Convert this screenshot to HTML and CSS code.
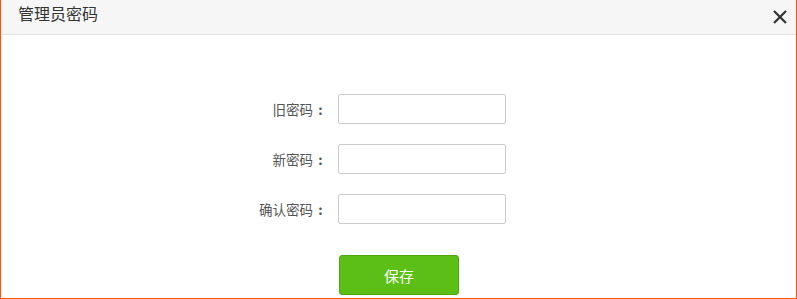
FILE: index.html
```html
<!DOCTYPE html>
<html lang="zh-CN">
<head>
<meta charset="utf-8">
<title>管理员密码</title>
<link rel="stylesheet" href="styles.css">
</head>
<body>
<div class="dialog">
  <div class="dialog-head">
    <span class="dialog-title">管理员密码</span>
    <span class="dialog-close" aria-label="关闭">
      <svg width="14" height="14" viewBox="0 0 14 14"><path d="M1 1 L13 13 M13 1 L1 13" stroke="#333" stroke-width="2.2" fill="none"/></svg>
    </span>
  </div>
  <div class="dialog-body">
    <div class="form-row">
      <label class="form-label">旧密码<span class="colon">:</span></label>
      <input class="form-input" type="password">
    </div>
    <div class="form-row">
      <label class="form-label">新密码<span class="colon">:</span></label>
      <input class="form-input" type="password">
    </div>
    <div class="form-row">
      <label class="form-label">确认密码<span class="colon">:</span></label>
      <input class="form-input" type="password">
    </div>
    <div class="form-actions">
      <button class="btn-save" type="button">保存</button>
    </div>
  </div>
</div>
</body>
</html>
```
FILE: styles.css
```css
html, body {
  margin: 0;
  padding: 0;
  background: #fff;
}
body {
  font-family: "Noto Sans CJK SC", "Noto Sans", "Liberation Sans", sans-serif;
  color: #333;
}
.dialog {
  box-sizing: border-box;
  width: 797px;
  height: 299px;
  border: 1px solid #ff5400;
  border-top: none;
  overflow: hidden;
}
.dialog-head {
  height: 34px;
  background: #f6f6f6;
  border-bottom: 1px solid #e3e3e3;
  display: flex;
  align-items: flex-start;
  justify-content: space-between;
  padding: 0 9px 0 17px;
}
.dialog-title {
  font-size: 16px;
  line-height: 26px;
  color: #333;
}
.dialog-close {
  display: flex;
  padding-top: 10px;
}
.dialog-body {
  padding: 59px 0 0 227px;
  display: flex;
  flex-direction: column;
  gap: 20px;
}
.form-row {
  display: flex;
  align-items: center;
  gap: 10px;
  height: 30px;
}
.form-label {
  width: 100px;
  text-align: right;
  font-size: 13.5px;
  color: #555;
}
.colon {
  display: inline-block;
  width: 15px;
  text-align: center;
  font-weight: bold;
}
.form-input {
  box-sizing: border-box;
  width: 168px;
  height: 30px;
  margin: 0;
  border: 1px solid #ccc;
  border-radius: 2px;
  outline: none;
  background: #fff;
}
.form-actions {
  padding-left: 111px;
  margin-top: 11px;
}
.btn-save {
  box-sizing: border-box;
  width: 120px;
  height: 40px;
  margin: 0;
  border: 1px solid #4ea712;
  border-radius: 3px;
  background: #5bbf16;
  color: #fff;
  font-family: inherit;
  font-size: 15px;
  cursor: pointer;
}
```
